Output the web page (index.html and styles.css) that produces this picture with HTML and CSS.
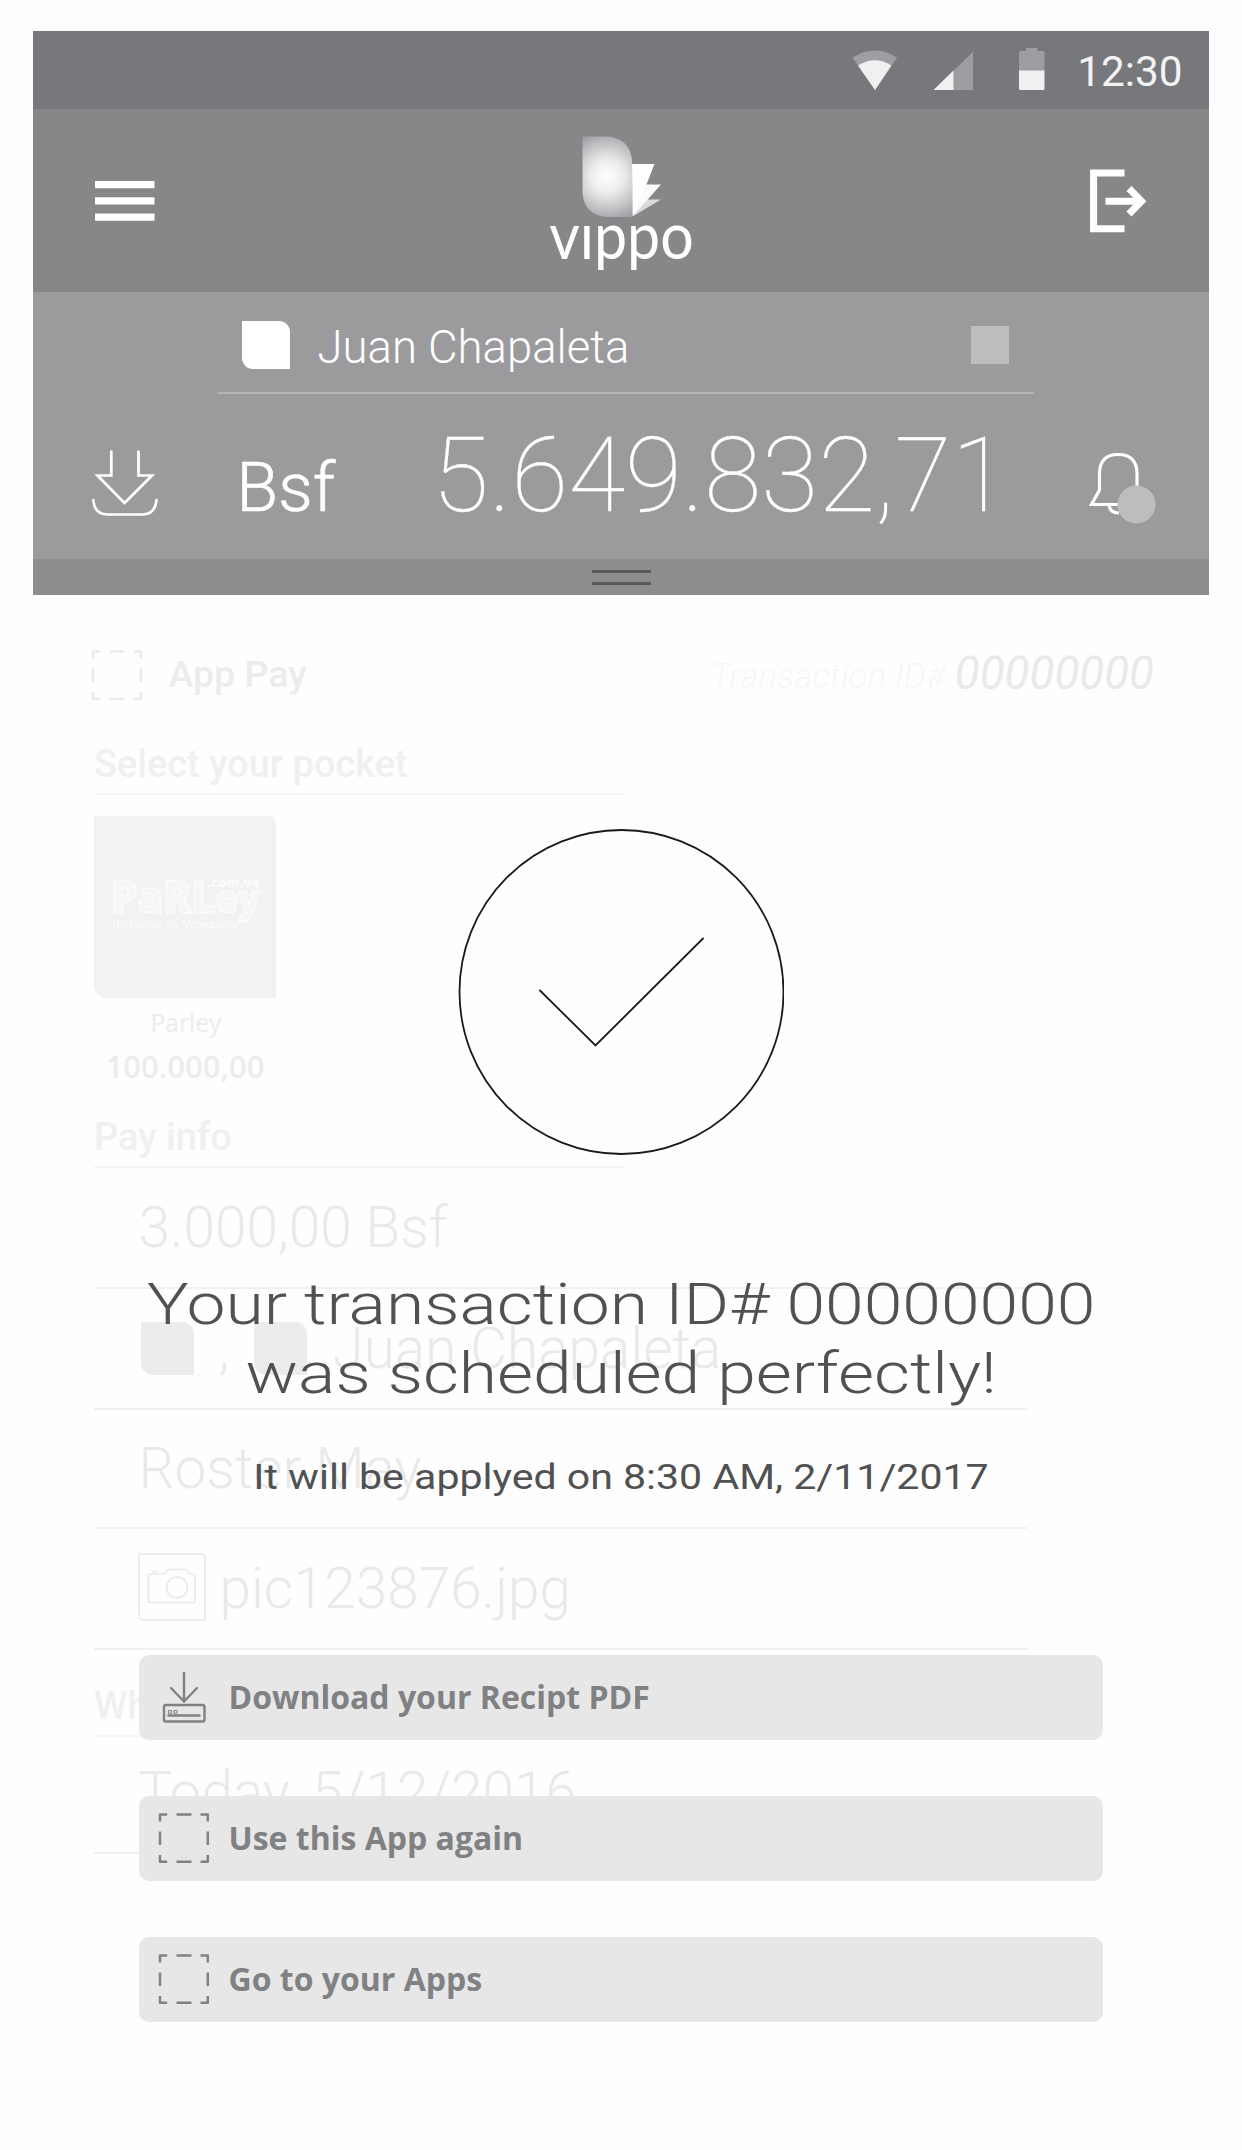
FILE: index.html
```html
<!DOCTYPE html>
<html lang="en">
<head>
<meta charset="utf-8">
<title>Vippo</title>
<link rel="stylesheet" href="styles.css">
</head>
<body>
<div class="screen">
  <header class="header">
    <div class="status">
      <svg class="status-icons" width="194" height="78" viewBox="852 31 194 78">
        <path d="M853.5 57.5Q876 43.500 898 57.500L876 90Z" fill="#9d9ea2"/>
        <path d="M859 65.500Q876 55 892.500 65.500L876 90Z" fill="#f0f0f1"/>
        <path d="M974 52V90H934.500Z" fill="#9d9ea2"/>
        <path d="M954.500 70.500V90H934.500Z" fill="#f0f0f1"/>
        <path d="M1027 48H1038.500V51H1044Q1045.500 51 1045.500 52.500V71H1020V52.500Q1020 51 1021.500 51H1027Z" fill="#9d9ea2"/>
        <path d="M1020 70.500H1045.500V88.500Q1045.500 90 1044 90H1021.500Q1020 90 1020 88.500Z" fill="#f0f0f1"/>
      </svg>
      <span class="clock">12:30</span>
    </div>
    <nav class="appbar">
      <svg width="62" height="44" viewBox="94 179 62 44" fill="#fff"><path d="M95 181H154.500V188.300H95ZM95 197.200H154.500V204.500H95ZM95 213.500H154.500V220.700H95Z"/></svg>
      <div class="brand">
        <svg width="82" height="82" viewBox="581 135.500 82 82">
          <defs>
            <radialGradient id="shine" cx="607" cy="176" r="46" gradientUnits="userSpaceOnUse">
              <stop offset="0" stop-color="#fff"/><stop offset=".35" stop-color="#ededee"/><stop offset=".7" stop-color="#c3c4c6"/><stop offset="1" stop-color="#9b9ca0"/>
            </radialGradient>
          </defs>
          <path d="M582.500 136H607Q632 138 632 163V216.500H607Q584 215 582.500 192Z" fill="url(#shine)"/>
          <path d="M646 199H661L632.500 216Z" fill="#d9dadb"/>
          <path d="M642 184H661L632.500 216Z" fill="#fafafa"/>
          <path d="M632 163.500H654.500L646 185L632.500 216Z" fill="#fff"/>
        </svg>
        <span class="wordmark">v&#305;ppo</span>
      </div>
      <svg width="60" height="66" viewBox="1088 167.500 60 66" fill="none" stroke="#fff" stroke-width="7"><path d="M1124.500 172.500H1093.600V228.300H1124.500M1105.500 200.700H1140"/><path d="M1129 188L1141.500 200.700L1129 213.500"/></svg>
    </nav>
    <section class="balance">
      <div class="account">
        <i class="leaf leaf-white"></i>
        <span class="account-name">Juan Chapaleta</span>
        <i class="account-mark"></i>
      </div>
      <div class="amount-row">
        <svg class="deposit" width="70" height="70" viewBox="90 448 70 70" fill="none" stroke="#fff" stroke-width="2.700" stroke-linecap="round"><path d="M111.300 451.500V475.500H97.500L124.500 503L152 475.500H138.500V451.500"/><path d="M93.300 500Q94.500 514.500 107.500 514.500H142.500Q155 514.500 156.500 500"/></svg>
        <span class="currency">Bsf</span>
        <span class="amount">5.649.832,71</span>
        <svg class="bell" width="70" height="76" viewBox="1088 450 70 76" fill="none" stroke="#fff" stroke-width="3.200"><path d="M1137 488V474Q1137 454.500 1118 454.500Q1099.500 454.500 1099.500 474V490L1091.500 504.500H1140M1109 505Q1110 513 1119 513"/><circle cx="1136.500" cy="504.500" r="19" fill="#bcbdbf" stroke="none"/></svg>
      </div>
    </section>
    <div class="handle"><i></i><i></i></div>
  </header>

  <main class="form">
    <div class="form-head">
      <svg width="52" height="52" viewBox="0 0 52 52" class="dashed"><use href="#dash"/></svg>
      <span class="form-title">App Pay</span>
      <span class="tx-label">Transaction ID#</span>
      <span class="tx-id">00000000</span>
    </div>
    <h2 class="heading">Select your pocket</h2>
    <div class="pocket">
      <svg class="tile" width="182" height="182" viewBox="94 816 182 182">
        <g fill="#f6f6f7" stroke="#fbfbfc" stroke-width="1.500"><text x="111" y="913" class="parley" textLength="149" lengthAdjust="spacingAndGlyphs">PaRL<tspan class="parley-low">ey</tspan></text></g>
        <g fill="#fbfbfc"><text x="207" y="887" class="parley-tld" textLength="53" lengthAdjust="spacingAndGlyphs">.com.ve</text>
        <text x="112" y="928" class="parley-tag" textLength="128" lengthAdjust="spacingAndGlyphs">¡El Parley de Venezuela!</text></g>
      </svg>
      <span class="pocket-name">Parley</span>
      <span class="pocket-amount">100.000,00</span>
    </div>
    <h2 class="heading heading-pay">Pay info</h2>
    <div class="row">3.000,00 Bsf</div>
    <div class="row row-people"><i class="leaf leaf-a"></i><span class="comma">,</span><i class="leaf leaf-b"></i><span>Juan Chapaleta</span></div>
    <div class="row row-name">Roster May</div>
    <div class="row row-photo">
      <svg class="photo" width="68" height="68" viewBox="137.500 1554 68 68" fill="none" stroke="#e9e9eb" stroke-width="1.600"><path d="M138.500 1555H201Q204.500 1555 204.500 1559V1621H143.500Q138.500 1621 138.500 1616Z"/><path d="M152.500 1575H163Q165.500 1575 166 1572.500Q166.500 1570.500 169 1570.500H184.500Q187 1570.500 187.500 1572.500Q188 1575 190.500 1575H192.500Q194.500 1575 194.500 1577V1601.500Q194.500 1603.500 192.500 1603.500H150Q148 1603.500 148 1601.500V1577Q148 1575 150 1575H152.500V1573.500Q152.500 1572 154 1572Q155.500 1572 155.500 1573.500V1575"/><circle cx="176.500" cy="1588.500" r="10.500"/></svg>
      <span class="photo-name">pic123876.jpg</span>
    </div>
    <h2 class="heading heading-when">When</h2>
    <div class="row row-date">Today, 5/12/2016</div>
  </main>

  <div class="overlay">
    <svg width="326" height="326" viewBox="458 829 326 326" fill="none" stroke="#1a1a1a" stroke-width="1.800" stroke-linecap="round"><circle cx="621.500" cy="992" r="162"/><path d="M540 990.500L595.500 1045.500L703 938.500"/></svg>
    <p class="message">Your transaction ID# 00000000<br>was scheduled perfectly!</p>
    <p class="schedule">It will be applyed on 8:30 AM, 2/11/2017</p>
    <div class="actions">
      <button class="action">
        <svg width="52" height="52" viewBox="157.500 1671 52 52" fill="none" stroke="#808184" stroke-width="2.400" stroke-linecap="round" stroke-linejoin="round"><path d="M183.500 1673V1701M170.500 1688L183.500 1701.500L196.500 1688"/><rect x="163.500" y="1705" width="40.500" height="16.500" rx="2"/><path d="M168 1715.500H199"/><path stroke-width="1" d="M168.300 1710.500H171V1713.300H168.300ZM173.800 1710.500H176.500V1713.300H173.800Z"/></svg>
        <span>Download your Recipt PDF</span>
      </button>
      <button class="action"><svg width="52" height="52" viewBox="0 0 52 52"><use href="#dash"/></svg><span>Use this App again</span></button>
      <button class="action"><svg width="52" height="52" viewBox="0 0 52 52"><use href="#dash"/></svg><span>Go to your Apps</span></button>
    </div>
  </div>
</div>
<svg width="0" height="0" class="sprite"><symbol id="dash" viewBox="0 0 52 52"><path fill="none" stroke="currentColor" stroke-width="2.500" stroke-linejoin="round" d="M9.200 2.500H2V9.500M18.500 2.500H33.500M42.500 2.500H49.800V9.500M49.800 19.500V33M49.800 43V49.800H42.500M33.500 49.800H18.500M9.200 49.800H2V43M2 33V19.500"/></symbol></svg>
</body>
</html>
```
FILE: styles.css
```css
* { box-sizing: border-box; }
body {
  margin: 0;
  background: #fefefe;
  font-family: Roboto, sans-serif;
}
svg { display: block; flex: none; }
i { display: block; flex: none; }
.sprite { position: absolute; }
.screen {
  position: relative;
  width: 1242px;
  height: 2150px;
  padding: 30.5px 33px 0;
  overflow: hidden;
}

/* Header */
.header { height: 564.5px; color: #fff; }
.status {
  display: flex;
  align-items: center;
  justify-content: flex-end;
  height: 78.5px;
  padding-right: 26.5px;
  background: #77787b;
}
.status-icons { margin-right: 32px; }
.clock {
  color: #f3f3f4;
  font-size: 42.3px;
  line-height: 60px;
  padding-top: 4px;
}
.appbar {
  display: flex;
  justify-content: space-between;
  align-items: center;
  height: 183px;
  padding: 0 61px;
  background: #868789;
}
.brand {
  display: flex;
  flex-direction: column;
  align-items: center;
  height: 183px;
  padding-top: 26.5px;
}
.wordmark {
  font-family: Lato, sans-serif;
  font-size: 65px;
  line-height: 66px;
  margin: -17px 0 0 -2px;
  transform: scaleX(.91);
}
.balance { height: 267px; background: #9b9b9d; }
.account {
  display: flex;
  align-items: center;
  width: 817px;
  height: 102px;
  margin-left: 183.5px;
  padding: 6px 24.5px 0 25px;
  border-bottom: 2px solid #b4b5b7;
}
.leaf { border-radius: 0 11px 0 11px; background: #ececed; }
.leaf-white { width: 48px; height: 48px; background: #fff; }
.account-name { margin-left: 28px; font-size: 45.5px; font-weight: 300; line-height: 60px; padding-top: 5px; }
.account-mark { width: 38.5px; height: 38.5px; margin-left: auto; background: #bcbdbf; }
.amount-row {
  display: grid;
  grid-template-columns: 203.5px 195.5px 654px 1fr;
  align-items: baseline;
  height: 165px;
}
.deposit { align-self: start; margin: 54px 0 0 57px; }
.currency { font-size: 68px; font-weight: 300; line-height: 68px; -webkit-text-stroke: .6px #fff; }
.amount { font-size: 104px; font-weight: 100; line-height: 164px; -webkit-text-stroke: .3px #fff; }
.bell { align-self: start; margin: 56px 0 0 2px; }
.handle {
  display: flex;
  flex-direction: column;
  align-items: center;
  gap: 9.5px;
  height: 36px;
  padding-top: 10.5px;
  background: #8d8d8f;
}
.handle i { width: 59px; height: 3px; background: #59595b; }

/* Form behind the confirmation */
.form { padding-left: 61px; color: #e9e9eb; }
.form-head {
  display: flex;
  align-items: center;
  height: 130px;
  padding-top: 30px;
  margin-left: -3px;
}
.dashed { color: #ebebec; }
.form-title { margin-left: 25.5px; padding-bottom: 2px; color: #ebecec; font-size: 37.5px; font-weight: 500; }
.tx-label { margin-left: auto; padding-top: 3px; color: #f7f7f8; font-size: 35px; font-style: italic; font-weight: 300; }
.tx-id { margin: 0 55px 0 9px; padding-bottom: 3px; font-size: 45.7px; font-style: italic; }
.heading {
  width: 530px;
  height: 70px;
  margin: 0;
  padding-top: 9px;
  border-bottom: 2px solid #f5f5f6;
  color: #f0f0f1;
  font-size: 37.9px;
  font-weight: 500;
  line-height: 61px;
}
.pocket {
  display: flex;
  flex-direction: column;
  align-items: center;
  width: 182px;
  padding-top: 21px;
  color: #ececec;
  font-family: "Open Sans", sans-serif;
  line-height: 44px;
}
.tile { border-radius: 0 8px 0 13px; background: #f2f2f4; }
.parley { font: 800 44px "Open Sans", sans-serif; }
.parley-low { font-size: 38px; }
.parley-tld { font: 800 13px "Open Sans", sans-serif; }
.parley-tag { font: 11.7px "Liberation Sans", sans-serif; }
.pocket-name { margin: 3px 0 -1px 2px; font-size: 24.6px; }
.pocket-amount { font-size: 31.1px; font-weight: 600; }
.heading-pay { margin-top: 10px; }
.row {
  display: flex;
  align-items: center;
  width: 933px;
  height: 120.5px;
  padding-left: 44.5px;
  border-bottom: 2px solid #f0f0f1;
  font-size: 56.7px;
  font-weight: 300;
}
.row-people { height: 121.5px; padding-top: 1px; }
.row-name { height: 119px; }
.leaf-a, .leaf-b { width: 53px; height: 53px; border-radius: 0 12px 0 12px; }
.leaf-a { margin-left: 2px; }
.comma { width: 35px; margin-left: 25px; }
.leaf-b { margin-right: 26px; }
.row-photo { padding-left: 43.5px; }
.photo { margin: -2px 14px 0 0; }
.photo-name { padding-top: 1px; }
.heading-when { margin-top: 17px; }
.row-date { height: 117.5px; padding-bottom: 4px; }

/* Confirmation */
.overlay {
  position: absolute;
  inset: 0;
  display: flex;
  flex-direction: column;
  align-items: center;
  padding-top: 829px;
  color: #505153;
  text-align: center;
}
.message {
  margin: 114.5px 0 0;
  font-size: 58px;
  font-weight: 300;
  line-height: 69.5px;
  white-space: nowrap;
  transform: scaleX(1.2);
}
.schedule {
  margin: 43.5px 0 0;
  font-size: 34.5px;
  line-height: 50px;
  white-space: nowrap;
  transform: scaleX(1.19);
}
.actions {
  display: flex;
  flex-direction: column;
  gap: 56px;
  width: 964px;
  margin-top: 152.5px;
}
.action {
  display: flex;
  align-items: center;
  gap: 19px;
  height: 85.2px;
  padding: 0 18.5px;
  border: 0;
  border-radius: 10px;
  background: #e7e7e7;
  color: #808183;
  font: 700 32px/44px "Open Sans", sans-serif;
}
```
